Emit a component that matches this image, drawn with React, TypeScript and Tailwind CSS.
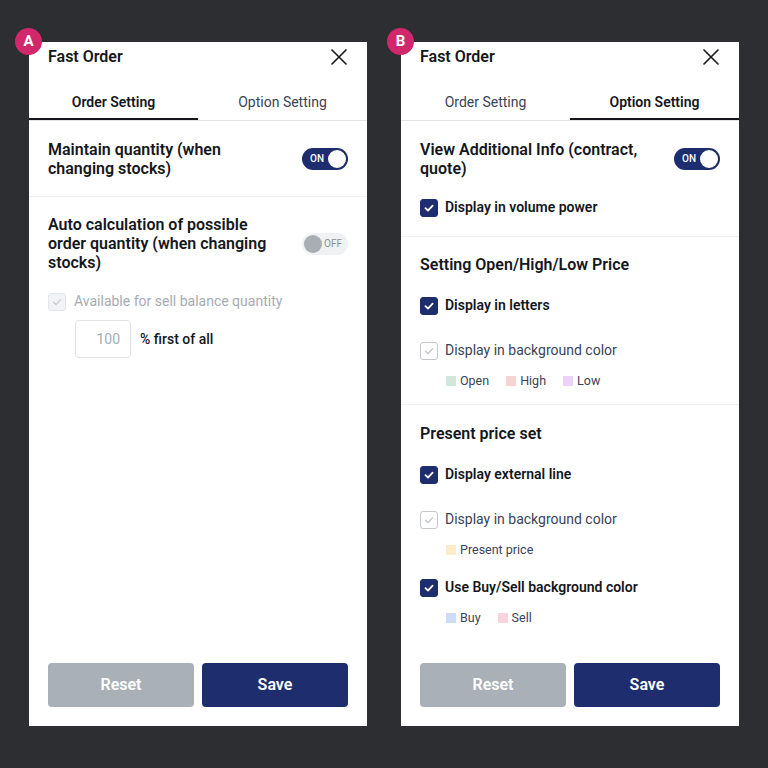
import React from 'react';

const NAVY = 'bg-[#1e2d6d]';

function Toggle({ on }: { on: boolean }) {
  if (on) {
    return (
      <div className={`relative w-[46px] h-[22px] rounded-full ${NAVY} flex items-center shrink-0`}>
        <span className="ml-[8px] text-[10px] font-medium text-white leading-none">ON</span>
        <span className="absolute right-[2px] top-[2px] w-[18px] h-[18px] rounded-full bg-white" />
      </div>
    );
  }
  return (
    <div className="relative w-[46px] h-[22px] rounded-full bg-[#f0f1f3] flex items-center justify-end shrink-0">
      <span className="absolute left-[2px] top-[2px] w-[18px] h-[18px] rounded-full bg-[#a9adb4]" />
      <span className="mr-[6px] text-[10px] text-[#8a8f98] leading-none">OFF</span>
    </div>
  );
}

function Check({ state }: { state: 'on' | 'off' | 'disabled' }) {
  const box =
    state === 'on'
      ? `${NAVY} border-[#1e2d6d]`
      : state === 'off'
      ? 'bg-white border-[#c4c8ce]'
      : 'bg-[#f2f3f5] border-[#e3e5e9]';
  const stroke = state === 'on' ? '#ffffff' : state === 'off' ? '#b9bec6' : '#c3c7cd';
  return (
    <span className={`w-[18px] h-[18px] rounded-[3px] border flex items-center justify-center shrink-0 ${box}`}>
      <svg width="12" height="12" viewBox="0 0 12 12" fill="none">
        <path
          d="M2.5 6.2 L5 8.6 L9.6 3.6"
          stroke={stroke}
          strokeWidth={state === 'on' ? 1.8 : 1.2}
          strokeLinecap="round"
          strokeLinejoin="round"
        />
      </svg>
    </span>
  );
}

function Row({ state, label, bold }: { state: 'on' | 'off'; label: string; bold?: boolean }) {
  return (
    <div className="flex items-center gap-[7px] h-[19px]">
      <Check state={state} />
      <span className={`text-[14px] ${bold ? 'font-semibold text-[#15171c]' : 'text-[#3a4357]'}`}>{label}</span>
    </div>
  );
}

function Legend({ items }: { items: [string, string][] }) {
  return (
    <div className="flex items-center gap-[17px] pl-[26px] h-[16px]">
      {items.map(([c, t]) => (
        <div key={t} className="flex items-center gap-[4px]">
          <span className={`w-[10px] h-[10px] ${c}`} />
          <span className="text-[12.5px] text-[#3a4357]">{t}</span>
        </div>
      ))}
    </div>
  );
}

function Panel({ letter, tab, children }: { letter: string; tab: 0 | 1; children: React.ReactNode }) {
  return (
    <div className="relative w-[338px] h-[684px] bg-white flex flex-col">
      <div className="absolute -left-[14px] -top-[14px] w-[27px] h-[27px] rounded-full bg-[#d1276b] flex items-center justify-center text-white text-[15px] font-bold">
        {letter}
      </div>
      <div className="h-[30px] px-[19px] flex items-center justify-between">
        <span className="text-[16px] font-semibold text-[#15171c]">Fast Order</span>
        <svg width="18" height="18" viewBox="0 0 18 18" fill="none">
          <path d="M1.5 1.5 L16.5 16.5 M16.5 1.5 L1.5 16.5" stroke="#1a1a1a" strokeWidth="1.6" />
        </svg>
      </div>
      <div className="mt-[10px] flex border-b border-[#e4e6ea]">
        {['Order Setting', 'Option Setting'].map((t, i) => (
          <div
            key={t}
            className={`flex-1 h-[38px] flex items-center justify-center text-[14px] ${
              i === tab
                ? 'pt-[5px] font-semibold text-[#15171c] border-b-2 border-[#15171c] -mb-px'
                : 'pt-[3px] text-[#3a4357]'
            }`}
          >
            {t}
          </div>
        ))}
      </div>
      <div className="flex-1 flex flex-col">{children}</div>
      <div className="flex gap-[8px] px-[19px] pb-[19px]">
        <button className="flex-1 h-[44px] rounded-[4px] bg-[#a9b0b7] text-white text-[16px] font-semibold">Reset</button>
        <button className={`flex-1 h-[44px] rounded-[4px] ${NAVY} text-white text-[16px] font-semibold`}>Save</button>
      </div>
    </div>
  );
}

export default function App() {
  return (
    <div
      className="w-[768px] h-[768px] bg-[#2d2e32] flex gap-[34px] pl-[29px] pt-[42px]"
      style={{ fontFamily: 'Roboto, "Liberation Sans", sans-serif' }}
    >
      <Panel letter="A" tab={0}>
        <div className="px-[19px] pt-[19px] pb-[18px] flex items-start justify-between border-b border-[#f0f1f3]">
          <p className="w-[220px] text-[16px] leading-[19px] font-semibold text-[#15171c]">
            Maintain quantity (when changing stocks)
          </p>
          <div className="mt-[8px]">
            <Toggle on />
          </div>
        </div>
        <div className="px-[19px] pt-[18px]">
          <div className="flex items-center justify-between">
            <p className="w-[236px] text-[16px] leading-[19px] font-semibold text-[#15171c]">
              Auto calculation of possible order quantity (when changing stocks)
            </p>
            <Toggle on={false} />
          </div>
          <div className="mt-[20px] flex items-center gap-[8px] h-[19px]">
            <Check state="disabled" />
            <span className="text-[14px] text-[#a6abb3]">Available for sell balance quantity</span>
          </div>
          <div className="mt-[9px] ml-[27px] flex items-center gap-[9px]">
            <div className="w-[56px] h-[38px] rounded-[4px] border border-[#dfe2e6] flex items-center justify-end pr-[10px] text-[14px] text-[#a6abb3]">
              100
            </div>
            <span className="text-[14px] font-medium text-[#15171c]">% first of all</span>
          </div>
        </div>
      </Panel>

      <Panel letter="B" tab={1}>
        <div className="px-[19px] pt-[19px] pb-[19px] border-b border-[#f0f1f3]">
          <div className="flex items-start justify-between">
            <p className="w-[236px] text-[16px] leading-[19px] font-semibold text-[#15171c]">
              View Additional Info (contract, quote)
            </p>
            <div className="mt-[8px]">
              <Toggle on />
            </div>
          </div>
          <div className="mt-[20px]">
            <Row state="on" label="Display in volume power" bold />
          </div>
        </div>
        <div className="px-[19px] pt-[18px] pb-[15px] border-b border-[#f0f1f3]">
          <p className="text-[16px] leading-[19px] font-semibold text-[#15171c]">Setting Open/High/Low Price</p>
          <div className="mt-[22px]">
            <Row state="on" label="Display in letters" bold />
          </div>
          <div className="mt-[26px]">
            <Row state="off" label="Display in background color" />
          </div>
          <div className="mt-[13px]">
            <Legend
              items={[
                ['bg-[#cfe8d9]', 'Open'],
                ['bg-[#f7d4d4]', 'High'],
                ['bg-[#ebd2f9]', 'Low'],
              ]}
            />
          </div>
        </div>
        <div className="px-[19px] pt-[19px]">
          <p className="text-[16px] leading-[19px] font-semibold text-[#15171c]">Present price set</p>
          <div className="mt-[22px]">
            <Row state="on" label="Display external line" bold />
          </div>
          <div className="mt-[26px]">
            <Row state="off" label="Display in background color" />
          </div>
          <div className="mt-[13px]">
            <Legend items={[['bg-[#fcecc9]', 'Present price']]} />
          </div>
          <div className="mt-[20px]">
            <Row state="on" label="Use Buy/Sell background color" bold />
          </div>
          <div className="mt-[13px]">
            <Legend
              items={[
                ['bg-[#cddcf8]', 'Buy'],
                ['bg-[#f9d3dd]', 'Sell'],
              ]}
            />
          </div>
        </div>
      </Panel>
    </div>
  );
}
